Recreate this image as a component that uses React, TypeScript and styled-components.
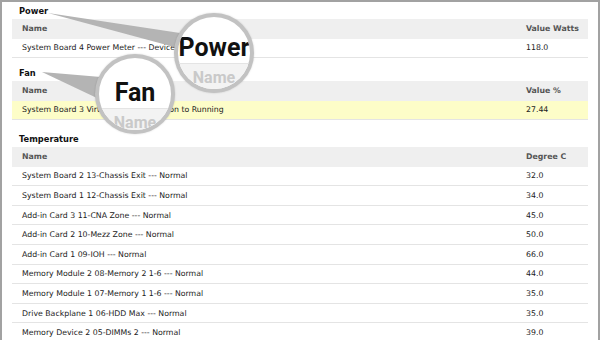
import React from 'react';
import styled, { createGlobalStyle } from 'styled-components';

const GlobalStyle = createGlobalStyle`
  html, body {
    margin: 0;
    padding: 0;
    background: #fff;
  }
  body {
    width: 600px;
    height: 340px;
    overflow: hidden;
  }
`;

type Reading = { name: string; value: string; warn?: boolean };
type Group = { title: string; unit: string; gap: number; rows: Reading[] };

const groups: Group[] = [
  {
    title: 'Power',
    unit: 'Value Watts',
    gap: 2,
    rows: [{ name: 'System Board 4 Power Meter --- Device Present', value: '118.0' }],
  },
  {
    title: 'Fan',
    unit: 'Value %',
    gap: 8,
    rows: [{ name: 'System Board 3 Virtual Fan --- Transition to Running', value: '27.44', warn: true }],
  },
  {
    title: 'Temperature',
    unit: 'Degree C',
    gap: 12,
    rows: [
      { name: 'System Board 2 13-Chassis Exit --- Normal', value: '32.0' },
      { name: 'System Board 1 12-Chassis Exit --- Normal', value: '34.0' },
      { name: 'Add-in Card 3 11-CNA Zone --- Normal', value: '45.0' },
      { name: 'Add-in Card 2 10-Mezz Zone --- Normal', value: '50.0' },
      { name: 'Add-in Card 1 09-IOH --- Normal', value: '66.0' },
      { name: 'Memory Module 2 08-Memory 2 1-6 --- Normal', value: '44.0' },
      { name: 'Memory Module 1 07-Memory 1 1-6 --- Normal', value: '35.0' },
      { name: 'Drive Backplane 1 06-HDD Max --- Normal', value: '35.0' },
      { name: 'Memory Device 2 05-DIMMs 2 --- Normal', value: '39.0' },
    ],
  },
];

// magnifier callouts over the table: lens centre, radius, label offset
const lenses = [
  { label: 'Power', x: 214, y: 53, r: 40, pad: 18 },
  { label: 'Fan', x: 135, y: 94, r: 40, pad: 22 },
];

const App: React.FC = () => {
  return (
    <>
      <GlobalStyle />
      <Frame>
        {groups.map((g) => (
          <Section key={g.title} $gap={g.gap}>
            <Heading>{g.title}</Heading>
            <HeadRow>
              <Cell>Name</Cell>
              <Cell>{g.unit}</Cell>
            </HeadRow>
            {g.rows.map((r) => (
              <Row key={r.name} $warn={r.warn}>
                <Cell>{r.name}</Cell>
                <Cell>{r.value}</Cell>
              </Row>
            ))}
          </Section>
        ))}

        <Overlay>
          <svg width="600" height="340" viewBox="0 0 600 340">
            <polygon points="48,13 180,33 178,48" fill="#b4b4b4" />
            <polygon points="42,72 101,77 99,99" fill="#b4b4b4" />
          </svg>
          {lenses.map((l) => (
            <Lens key={l.label} $x={l.x} $y={l.y} $r={l.r} $pad={l.pad}>
              <BigLabel>{l.label}</BigLabel>
              <GhostBand>Name</GhostBand>
            </Lens>
          ))}
        </Overlay>
      </Frame>
    </>
  );
};

const Frame = styled.div`
  position: relative;
  box-sizing: border-box;
  width: 600px;
  height: 340px;
  overflow: hidden;
  border: 2px solid #a2a2a2;
  border-bottom: none;
  padding: 0 10px;
  font-family: "DejaVu Sans", Verdana, sans-serif;
  color: #222;
`;

const Section = styled.section<{ $gap: number }>`
  margin-top: ${(p) => p.$gap}px;
`;

const Heading = styled.h3`
  margin: 0;
  height: 15px;
  line-height: 15px;
  padding-left: 7px;
  font-size: 8.3px;
  font-weight: bold;
  color: #111;
`;

const HeadRow = styled.div`
  display: grid;
  grid-template-columns: 1fr 72px;
  align-items: center;
  height: 19.5px;
  background: #efefef;
  font-size: 7.8px;
  font-weight: bold;
  color: #555;
`;

const Row = styled.div<{ $warn?: boolean }>`
  box-sizing: border-box;
  display: grid;
  grid-template-columns: 1fr 72px;
  align-items: center;
  height: 19.6px;
  border-bottom: 1px solid #e4e4e4;
  background: ${(p) => (p.$warn ? '#fdfdc8' : '#fff')};
  font-size: 7.8px;
`;

const Cell = styled.div`
  padding-left: 10px;
  white-space: nowrap;
  overflow: hidden;
`;

const Overlay = styled.div`
  position: absolute;
  top: -2px;
  left: -2px;
  width: 600px;
  height: 340px;
  pointer-events: none;

  svg {
    position: absolute;
    top: 0;
    left: 0;
  }
`;

const Lens = styled.div<{ $x: number; $y: number; $r: number; $pad: number }>`
  position: absolute;
  left: ${(p) => p.$x - p.$r}px;
  top: ${(p) => p.$y - p.$r}px;
  width: ${(p) => p.$r * 2}px;
  height: ${(p) => p.$r * 2}px;
  box-sizing: border-box;
  display: flex;
  flex-direction: column;
  gap: 2px;
  padding-top: ${(p) => p.$pad}px;
  border-radius: 50%;
  border: 4px solid #c2c2c2;
  background: #fff;
  overflow: hidden;
  box-shadow: 0 0 2px rgba(0, 0, 0, 0.18);
  font-family: Roboto, "Liberation Sans", sans-serif;
  text-align: center;
`;

const BigLabel = styled.div`
  font-size: 25px;
  line-height: 26px;
  font-weight: 700;
  color: #111;
`;

const GhostBand = styled.div`
  flex: 1;
  border-top: 1px solid #e4e4e4;
  background: #f3f3f3;
  padding-top: 5px;
  font-size: 16px;
  line-height: 18px;
  font-weight: 700;
  color: #c9c9c9;
`;

export default App;
